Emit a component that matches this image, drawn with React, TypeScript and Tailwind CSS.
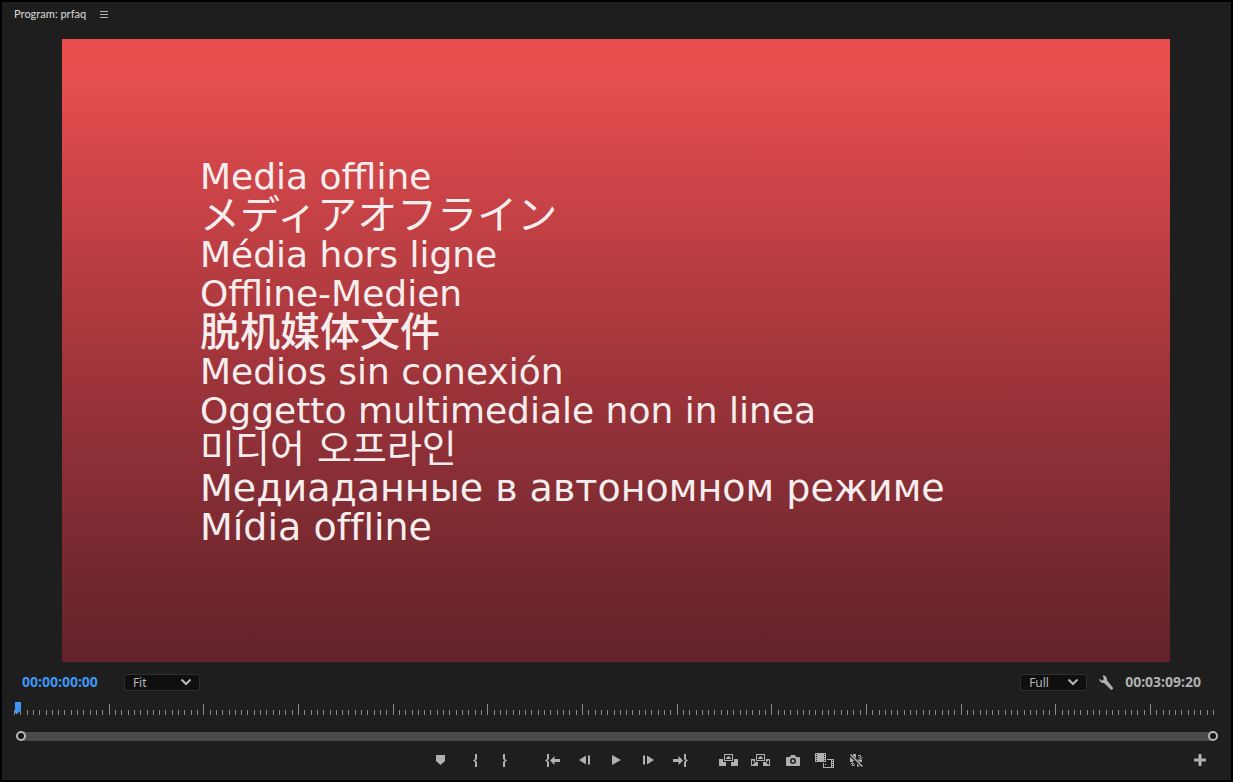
import React, { useState } from "react";

type IconProps = { w: number; h: number; children: React.ReactNode };

function Glyph({ w, h, children }: IconProps) {
  return (
    <svg width={w} height={h} viewBox={`0 0 ${w} ${h}`} fill="currentColor" aria-hidden="true">
      {children}
    </svg>
  );
}

const openBrace = "M4 0v5L2.500 6.500 4 8v5H2V8L0 6.500 2 5V0z";
const closeBrace = "M0 0v5l1.500 1.500L0 8v5h2V8l2-1.500L2 5V0z";

const messages = [
  { text: "Media offline", lang: "en", style: "text-[36px]" },
  { text: "メディアオフライン", lang: "ja", style: "text-[40px]" },
  { text: "Média hors ligne", lang: "fr", style: "text-[36px]" },
  { text: "Offline-Medien", lang: "de", style: "text-[36px]" },
  { text: "脱机媒体文件", lang: "zh-CN", style: "text-[40px] font-medium" },
  { text: "Medios sin conexión", lang: "es", style: "text-[36px]" },
  { text: "Oggetto multimediale non in linea", lang: "it", style: "text-[36px]" },
  { text: "미디어 오프라인", lang: "ko", style: "text-[38px]" },
  { text: "Медиаданные в автономном режиме", lang: "ru", style: "text-[38px]" },
  { text: "Mídia offline", lang: "pt", style: "text-[38px] [font-variant-ligatures:none]" },
];

function Select({ label, options, width }: { label: string; options: string[]; width: string }) {
  return (
    <div className={`relative flex items-center ${width}`}>
      <select
        aria-label={label}
        className="h-[17px] w-full appearance-none rounded-[3px] border border-[#303030] bg-[#0f0f0f] pl-2 text-[12px] leading-[15px] text-[#b8b8b8]"
      >
        {options.map((o) => (
          <option key={o}>{o}</option>
        ))}
      </select>
      <svg className="pointer-events-none absolute right-2 text-[#b8b8b8]" width="12" height="8" viewBox="0 0 12 8" fill="none" stroke="currentColor" strokeWidth="2">
        <path d="M1.500 1.500 6 6l4.500-4.500" />
      </svg>
    </div>
  );
}

function TimeRuler() {
  return (
    <div className="relative h-[14px]">
      <svg className="block h-[14px] w-full overflow-visible" shapeRendering="crispEdges" aria-hidden="true">
        {Array.from({ length: 191 }, (_, i) => (
          <rect key={i} x={`${(i / 190) * 100}%`} y={i > 0 && i % 15 === 0 ? 2 : 8} width="1" height={i > 0 && i % 15 === 0 ? 11 : 5} fill="#8a8a8a" />
        ))}
      </svg>
      <button aria-label="Playhead" className="absolute top-0 left-px text-[#4096f3]">
        <svg className="block" width="6" height="13" viewBox="0 0 6 13" fill="currentColor">
          <path d="M0 0h6v8L2 12H1V11H0z" />
        </svg>
      </button>
    </div>
  );
}

function Tool({ label, width, children }: { label: string; width: string; children: React.ReactNode }) {
  return (
    <button aria-label={label} title={label} className={`flex h-5 items-center justify-center ${width}`}>
      {children}
    </button>
  );
}

export default function App() {
  const [playing, setPlaying] = useState(false);
  return (
    <main className="flex min-h-screen flex-col border-2 border-black bg-[#1e1e1e] font-['Noto_Sans',sans-serif] text-[#b0b0b0]">
      <header className="flex h-[37px] items-start gap-[14px] pt-1 pl-3">
        <h1 className="font-['Lato',sans-serif] text-[11px] leading-4 font-medium text-[#d0d0d0]">Program: prfaq</h1>
        <button aria-label="Panel menu" className="flex h-4 items-center">
          <Glyph w={8} h={7}>
            <path d="M0 0h8v1H0zM0 3h8v1H0zM0 6h8v1H0z" />
          </Glyph>
        </button>
      </header>

      <section aria-label="Program video" className="pr-[61px] pl-15">
        <div className="flex aspect-video flex-col bg-linear-to-b from-[#e94e4f] from-5% via-[#a1353b] via-52% to-[#61222a] pt-[118px] pl-[138px] font-['DejaVu_Sans','Noto_Sans_CJK_JP',sans-serif] text-[#f6eeee]">
          {messages.map((m) => (
            <p key={m.lang} lang={m.lang} className={`h-[39px] leading-[39px] whitespace-nowrap ${m.style}`}>
              {m.text}
            </p>
          ))}
        </div>
      </section>

      <div className="flex h-10 items-center justify-between pr-[30px] pl-5">
        <div className="flex items-center gap-[26px]">
          <span className="text-[14px] leading-4 font-bold text-[#4096f3]">00:00:00:00</span>
          <Select label="Zoom level" options={["Fit", "50%", "100%"]} width="w-[76px]" />
        </div>
        <div className="flex items-center gap-3">
          <Select label="Playback resolution" options={["Full", "1/2", "1/4"]} width="w-[67px]" />
          <button aria-label="Settings">
            <Glyph w={14} h={15}>
              <path d="M3.500 0.500C6 0 8.500 2 7.800 5L13.500 12.200A1.400 1.400 0 0 1 11.500 14.200L5 8C2.500 8.300 0 6.500 0.300 3.800L3 5.800 5 4z" />
            </Glyph>
          </button>
          <span className="text-[14px] leading-4 font-bold">00:03:09:20</span>
        </div>
      </div>

      <div className="pr-[18px] pl-3">
        <TimeRuler />
      </div>

      <div className="mt-[15px] flex items-center pr-[13px] pl-[14px]">
        <button aria-label="Zoom range start" className="z-10 -mr-[5px] size-[10px] shrink-0 rounded-full border-2 border-[#b8b8b8] bg-[#141414]" />
        <div className="h-[9px] flex-1 bg-[#4b4b4b]" />
        <button aria-label="Zoom range end" className="z-10 -ml-[5px] size-[10px] shrink-0 rounded-full border-2 border-[#b8b8b8] bg-[#141414]" />
      </div>

      <footer className="mt-[9px] grid grid-cols-[1fr_auto_1fr] items-center pr-[25px] pl-[89px]">
        <div />
        <div className="flex items-center">
          <Tool label="Add marker" width="w-8">
            <Glyph w={9} h={10}><path d="M0 0h9v6L4.500 10 0 6z" /></Glyph>
          </Tool>
          <Tool label="Mark in" width="w-9"><Glyph w={4} h={13}><path d={openBrace} /></Glyph></Tool>
          <Tool label="Mark out" width="w-6"><Glyph w={4} h={13}><path d={closeBrace} /></Glyph></Tool>
          <span className="w-5" />
          <Tool label="Go to in" width="w-8">
            <Glyph w={15} h={13}><path d={openBrace} /><path d="M5 6.500 9.500 2v3H15v3H9.500v3z" /></Glyph>
          </Tool>
          <Tool label="Step back" width="w-8">
            <Glyph w={11} h={10}><path d="M0 5 7 .5v9zM9 .5h2v9H9z" /></Glyph>
          </Tool>
          <button aria-label={playing ? "Stop" : "Play"} onClick={() => setPlaying(!playing)} className="flex h-5 w-8 items-center justify-center">
            <Glyph w={9} h={10}><path d="M0 0 9 5 0 10z" /></Glyph>
          </button>
          <Tool label="Step forward" width="w-8">
            <Glyph w={11} h={10}><path d="M11 5 4 .5v9zM0 .5h2v9H0z" /></Glyph>
          </Tool>
          <Tool label="Go to out" width="w-8">
            <Glyph w={15} h={13}><path d="M10 6.500 5.500 2v3H0v3h5.500v3z" /><path transform="translate(11 0)" d={closeBrace} /></Glyph>
          </Tool>
          <span className="w-4" />
          <Tool label="Lift" width="w-8">
            <Glyph w={19} h={12}><path fillRule="evenodd" d="M5 0h9v7H5zM6 1v5h7V1zM7 5V4l2.500-2L12 4v1zM0 5h4v3h3v4H0zM15 5h4v7h-7V8h3z" /></Glyph>
          </Tool>
          <Tool label="Extract" width="w-8">
            <Glyph w={19} h={12}><path fillRule="evenodd" d="M5 0h9v7H5zM6 1v5h7V1zM7 5V4l2.500-2L12 4v1zM0 5h4v3h3v4H0zM1 6v5l3-2.500zM15 5h4v7h-7V8h3zM18 6l-3 2.500 3 2.500z" /></Glyph>
          </Tool>
          <Tool label="Export frame" width="w-8">
            <Glyph w={14} h={11}><path fillRule="evenodd" d="M1 2h3l1-2h4l1 2h3a1 1 0 0 1 1 1v7a1 1 0 0 1-1 1H1a1 1 0 0 1-1-1V3a1 1 0 0 1 1-1zM7 3a3 3 0 1 0 0 6 3 3 0 0 0 0-6zM7 4.500a1.500 1.500 0 1 1 0 3 1.500 1.500 0 0 1 0-3z" /></Glyph>
          </Tool>
          <Tool label="Comparison view" width="w-8">
            <Glyph w={19} h={15}>
              <path fillRule="evenodd" d="M0 0h11v9H0zM1 1v1h1V1zM1 3v1h1V3zM1 5v1h1V5zM1 7v1h1V7zM9 1v1h1V1zM9 3v1h1V3zM9 5v1h1V5zM9 7v1h1V7zM12 6h7v9H8v-5h1v4h7V7h-4zM17 7v1h1V7zM17 9v1h1V9zM17 11v1h1v-1zM17 13v1h1v-1zM10 11h1v1h-1z" />
            </Glyph>
          </Tool>
          <Tool label="Toggle proxies" width="w-8">
            <Glyph w={13} h={13}>
              <path d="M.5.5 12.500 12.500" stroke="currentColor" strokeWidth="1.500" />
              <path d="M3 0h3v4L3 1.500zM0 3l4.500 4H3v1H0zM7 5.500h5V8h-2zM7 9.500l3 3H7z" />
              <path d="M8 1.500h2.500v2M8.500 3l2 2 2-2M4.500 11.500H2.500v-2M.5 10.500l2-2 2 2" fill="none" stroke="currentColor" />
            </Glyph>
          </Tool>
        </div>
        <button aria-label="Button editor" className="justify-self-end">
          <Glyph w={12} h={12}><path d="M4.500 0h3v4.500H12v3H7.500V12h-3V7.500H0v-3h4.500z" /></Glyph>
        </button>
      </footer>
    </main>
  );
}
